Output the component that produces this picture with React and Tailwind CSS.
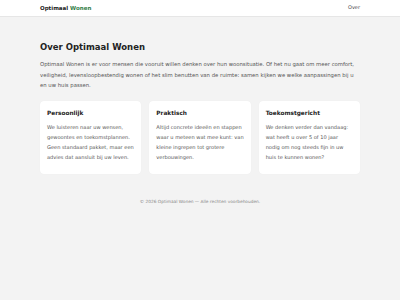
export default function App() {
    const cards = [
        {
            title: 'Persoonlijk',
            text: 'We luisteren naar uw wensen, gewoontes en toekomstplannen. Geen standaard pakket, maar een advies dat aansluit bij uw leven.',
        },
        {
            title: 'Praktisch',
            text: 'Altijd concrete ideeën en stappen waar u meteen wat mee kunt: van kleine ingrepen tot grotere verbouwingen.',
        },
        {
            title: 'Toekomstgericht',
            text: 'We denken verder dan vandaag: wat heeft u over 5 of 10 jaar nodig om nog steeds fijn in uw huis te kunnen wonen?',
        },
    ];

    return (
        <div className="min-h-[300px] bg-[#f3f3f3] font-['DejaVu_Sans',sans-serif] text-[#222]">
            <header className="bg-white border-b border-[#e6e6e6]">
                <div className="px-10 h-4 flex items-center justify-between">
                    <div className="text-[5.5px] font-bold">
                        Optimaal <span className="text-[#2f7d45]">Wonen</span>
                    </div>
                    <span className="text-[5px] text-[#444]">Over</span>
                </div>
            </header>

            <main className="px-10 pt-6">
                <h1 className="text-[8.5px] leading-[12px] font-bold text-[#222] mb-[6px]">Over Optimaal Wonen</h1>
                <p className="text-[5.3px] leading-[10.5px] text-[#555]">
                    Optimaal Wonen is er voor mensen die vooruit willen denken over hun woonsituatie. Of het nu gaat om meer comfort,
                    veiligheid, levensloopbestendig wonen of het slim benutten van de ruimte: samen kijken we welke aanpassingen bij u
                    en uw huis passen.
                </p>

                <div className="grid grid-cols-3 gap-2 mt-[10px]">
                    {cards.map((card) => (
                        <div key={card.title} className="bg-white rounded-[4px] px-[7px] pt-[8px] pb-[10px] h-[73px] shadow-[0_0_1px_rgba(0,0,0,0.06)]">
                            <h3 className="text-[5.8px] leading-[8px] font-bold text-[#222] mb-[5px]">{card.title}</h3>
                            <p className="text-[5.07px] leading-[10px] text-[#555]">{card.text}</p>
                        </div>
                    ))}
                </div>
            </main>

            <footer className="pt-[25px] text-center text-[4.3px] text-[#888]">
                © 2026 Optimaal Wonen — Alle rechten voorbehouden.
            </footer>
        </div>
    );
}
